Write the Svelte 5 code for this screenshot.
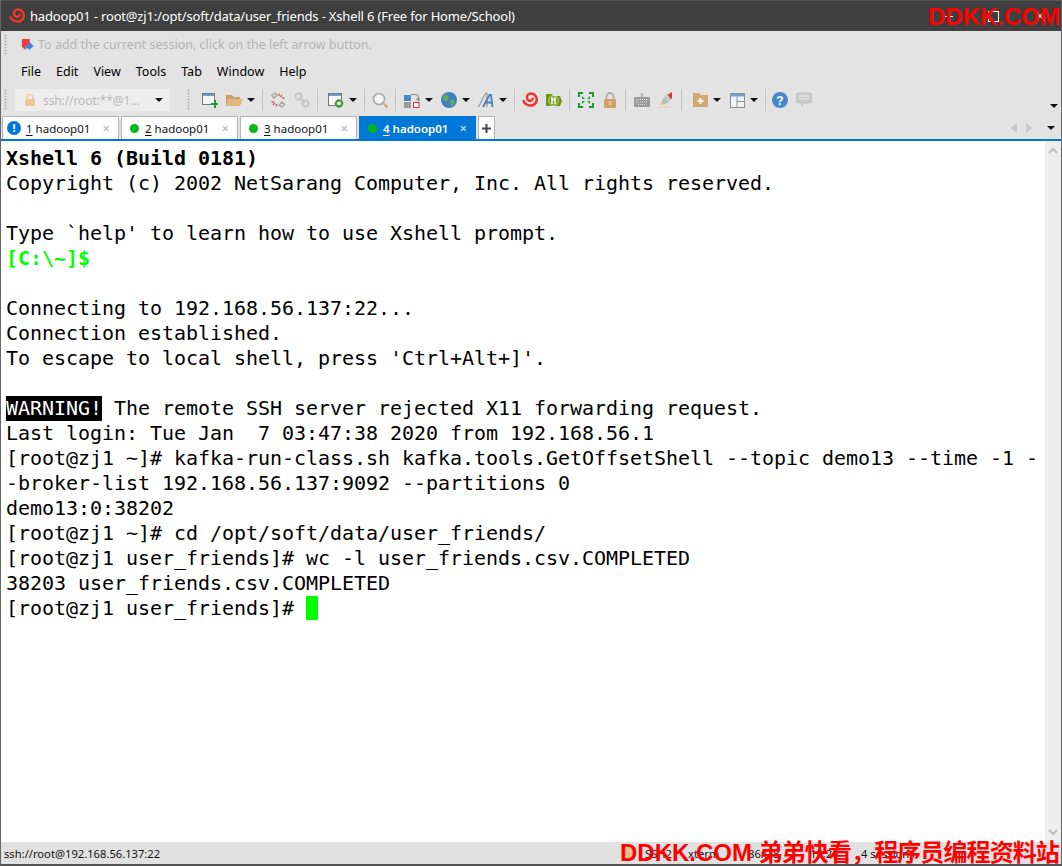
<script>
  const menus = ["File", "Edit", "View", "Tools", "Tab", "Window", "Help"];
  const tabs = [
    { n: "1", name: "hadoop01", state: "alert" },
    { n: "2", name: "hadoop01", state: "ok" },
    { n: "3", name: "hadoop01", state: "ok" },
    { n: "4", name: "hadoop01", state: "ok", active: true },
  ];
  const lines = [
    { text: "Xshell 6 (Build 0181)", cls: "bold" },
    { text: "Copyright (c) 2002 NetSarang Computer, Inc. All rights reserved." },
    { text: "" },
    { text: "Type `help' to learn how to use Xshell prompt." },
    { text: "[C:\\~]$", cls: "green bold" },
    { text: "" },
    { text: "Connecting to 192.168.56.137:22..." },
    { text: "Connection established." },
    { text: "To escape to local shell, press 'Ctrl+Alt+]'." },
    { text: "" },
    { warn: "WARNING!", text: " The remote SSH server rejected X11 forwarding request." },
    { text: "Last login: Tue Jan  7 03:47:38 2020 from 192.168.56.1" },
    { text: "[root@zj1 ~]# kafka-run-class.sh kafka.tools.GetOffsetShell --topic demo13 --time -1 -" },
    { text: "-broker-list 192.168.56.137:9092 --partitions 0" },
    { text: "demo13:0:38202" },
    { text: "[root@zj1 ~]# cd /opt/soft/data/user_friends/" },
    { text: "[root@zj1 user_friends]# wc -l user_friends.csv.COMPLETED" },
    { text: "38203 user_friends.csv.COMPLETED" },
    { text: "[root@zj1 user_friends]# ", cursor: true },
  ];
</script>

{#snippet swirl()}
  <svg width="16" height="16" viewBox="0 0 16 16">
    <path d="M1.300 8 C2.500 14 11 15.500 14 10.500 C16.300 5.500 12.500 1 8.500 1.500 C5 2 3.800 6 6.300 8.200 C8.300 9.800 11 8.300 10.600 5.600" fill="none" stroke="#e8392e" stroke-width="2.500" />
  </svg>
{/snippet}

{#snippet drop()}
  <span class="drop"><i class="tri"></i></span>
{/snippet}

<div class="window">
  <div class="titlebar">
    <span class="logo">{@render swirl()}</span>
    <span class="title">hadoop01 - root@zj1:/opt/soft/data/user_friends - Xshell 6 (Free for Home/School)</span>
    <span class="winbtns">
      <i class="min"></i>
      <i class="max"></i>
      <svg class="close" width="10" height="10" viewBox="0 0 10 10"><path d="M0 0L10 10M10 0L0 10" stroke="#fff" stroke-width="1.2" /></svg>
    </span>
  </div>

  <div class="chrome">
    <div class="hintrow">
      <span class="grip"></span>
      <svg class="hinticon" width="14" height="14" viewBox="0 0 16 16">
        <path d="M1 1H10V6L5 10V14L1 10Z" fill="#ea3b3f" />
        <path d="M5 10L9 6V4L14.500 9L9 14V12H5Z" fill="#3f87d6" />
      </svg>
      <span class="hint">To add the current session, click on the left arrow button.</span>
    </div>

    <div class="menubar">
      {#each menus as m}
        <span class="menu">{m}</span>
      {/each}
    </div>

    <div class="toolbar">
      <span class="grip"></span>
      <div class="address">
        <svg width="12" height="12" viewBox="0 0 12 12">
          <path d="M3 5V3.500A3 3 0 0 1 9 3.500V5" fill="none" stroke="#e6cfa6" stroke-width="1.500" />
          <rect x="1" y="5" width="10" height="7" rx="1" fill="#e8c890" />
        </svg>
        <span class="addrtext">ssh://root:**@1...</span>
        <i class="tri"></i>
      </div>
      <span class="grip second"></span>

      <span class="btn">
        <svg width="16" height="16" viewBox="0 0 16 16">
          <rect x="0.500" y="1.500" width="12" height="11" fill="#f6f6f6" stroke="#777" />
          <rect x="1" y="2" width="11" height="2" fill="#6b9fd8" />
          <path d="M12 8V11H9V13H12V16H14V13H16V11H14V8Z" fill="#1e9e2c" />
        </svg>
      </span>
      <span class="btn">
        <svg width="17" height="16" viewBox="0 0 17 16">
          <path d="M0 3H6L7.500 5H14V13H0Z" fill="#c9a06c" />
          <path d="M2 7H17L14 14H0Z" fill="#e2b880" />
        </svg>
      </span>
      {@render drop()}
      <span class="sep"></span>

      <span class="btn">
        <svg width="16" height="16" viewBox="0 0 16 16" fill="none">
          <path d="M2 3.500L5 1L7 3L4 6ZM9 13L12 10L14.500 12.500L11.500 15Z" stroke="#aaa" stroke-width="1.600" />
          <path d="M9 1.500V4M12 3L10.500 5M14.500 6H12M1.500 10H4M3 13L5 11M6.500 14.500V12" stroke="#e0555a" stroke-width="1.400" />
        </svg>
      </span>
      <span class="btn">
        <svg width="16" height="16" viewBox="0 0 16 16" fill="none">
          <rect x="1.500" y="1.500" width="6" height="6" rx="2.500" stroke="#c4c4c4" stroke-width="1.800" />
          <rect x="8.500" y="8.500" width="6" height="6" rx="2.500" stroke="#c4c4c4" stroke-width="1.800" />
          <path d="M5.500 5.500L10.500 10.500" stroke="#c4c4c4" stroke-width="2" />
        </svg>
      </span>
      <span class="sep wide"></span>

      <span class="btn">
        <svg width="16" height="16" viewBox="0 0 16 16">
          <rect x="0.500" y="1.500" width="13" height="12" fill="#f6f6f6" stroke="#777" />
          <rect x="1" y="2" width="12" height="2" fill="#6b9fd8" />
          <circle cx="11" cy="11.500" r="3" fill="none" stroke="#3f9e2f" stroke-width="2" />
          <path d="M11 7V9M11 14V16M6.500 11.500H8.500M13.500 11.500H15.500" stroke="#3f9e2f" stroke-width="1.500" />
        </svg>
      </span>
      {@render drop()}
      <span class="sep"></span>

      <span class="btn">
        <svg width="17" height="17" viewBox="0 0 17 17" fill="none">
          <circle cx="7" cy="7" r="5.500" fill="#f4f4f4" stroke="#a8a8a8" stroke-width="1.600" />
          <path d="M11 11L15.500 15.500" stroke="#d9a877" stroke-width="2.400" />
        </svg>
      </span>
      <span class="sep mid"></span>

      <span class="btn">
        <svg width="16" height="16" viewBox="0 0 16 16" fill="none">
          <rect x="0" y="3" width="7" height="6" fill="#4a86c8" />
          <rect x="0" y="10" width="7" height="6" fill="#9a9a9a" />
          <rect x="9.500" y="10.500" width="5.500" height="5" fill="#fff" stroke="#d8343a" />
          <path d="M7 2.500H11Q14.500 2.500 14.500 6V8M12.500 6.500L14.500 8.500L16 6.500" stroke="#8a8a8a" stroke-width="1.200" />
        </svg>
      </span>
      {@render drop()}

      <span class="btn">
        <svg width="16" height="16" viewBox="0 0 16 16">
          <circle cx="8" cy="8" r="8" fill="#3f7fc4" />
          <path d="M3 3C5 2 7 3 8 5C8 7 6 7.500 5 9.500C3 9 1.500 7 2 5ZM9 8C11 7 13.500 8 14 10C13.500 12 12 14 10.500 14.500C10 12.500 8.500 10 9 8Z" fill="#5fae52" />
        </svg>
      </span>
      {@render drop()}

      <span class="btn">
        <svg width="17" height="16" viewBox="0 0 17 16" fill="none">
          <path d="M0.500 15L7.500 1.500H9V15" stroke="#a0a0a0" stroke-width="1.300" />
          <path d="M5 15L11.500 3H13L14.500 15M7.500 10.500H14" stroke="#3f7fc4" stroke-width="1.800" />
        </svg>
      </span>
      {@render drop()}
      <span class="sep"></span>

      <span class="btn">{@render swirl()}</span>
      <span class="btn">
        <svg width="16" height="16" viewBox="0 0 16 16">
          <path d="M0 2H6L7 4H14L16 9L14 14H0Z" fill="#6f9a10" />
          <circle cx="7.500" cy="8.500" r="4.800" fill="#6f9a10" stroke="#fff" stroke-width="0.600" />
          <path d="M6 5V12M9 5V12M6 8L9 7" fill="none" stroke="#fff" stroke-width="1.500" />
        </svg>
      </span>
      <span class="sep mid"></span>

      <span class="btn">
        <svg width="16" height="16" viewBox="0 0 16 16" fill="#1f9a2c">
          <path d="M0 0H5V2H2V5H0ZM11 0H16V5H14V2H11ZM0 11H2V14H5V16H0ZM14 11H16V16H11V14H14Z" />
          <path d="M4 4L7 7H4ZM12 4L9 7H12ZM4 12L7 9H4ZM12 12L9 9H12Z" />
        </svg>
      </span>
      <span class="btn">
        <svg width="14" height="16" viewBox="0 0 14 16" fill="none">
          <path d="M3.500 8V4.500A3.500 3.500 0 0 1 10.500 4.500V8" stroke="#b0b0b0" stroke-width="1.800" />
          <rect x="1" y="7" width="12" height="9" rx="1" fill="#cfa268" />
          <rect x="6.300" y="9" width="1.400" height="4" fill="#eedcc0" />
        </svg>
      </span>
      <span class="sep mid"></span>

      <span class="btn">
        <svg width="16" height="16" viewBox="0 0 16 16">
          <rect x="0" y="5" width="16" height="10" rx="1" fill="#9a9a9a" />
          <path d="M7.500 1H8.500V5H7.500Z" fill="#888" />
          <path d="M2 7.500H14M2 10H14M4 12.500H12" stroke="#e4e4e4" stroke-dasharray="1 1" />
        </svg>
      </span>
      <span class="btn">
        <svg width="16" height="16" viewBox="0 0 16 16">
          <path d="M6 5L11 10L7 12L4 13L4 9Z" fill="#bdbdbd" />
          <path d="M9 3L14 0V6L12 8Z" fill="#d93340" />
          <path d="M6 5L9 2L13 7L11 10Z" fill="#c8c8c8" />
          <path d="M3 10L5 12L2 13.500Z" fill="#f0c58c" />
          <rect x="0" y="14.500" width="12" height="1" fill="#f0c88e" />
        </svg>
      </span>
      <span class="sep wide"></span>

      <span class="btn">
        <svg width="15" height="14" viewBox="0 0 15 14">
          <path d="M0 0H6L7.500 2H15V14H0Z" fill="#d4a871" />
          <path d="M6.500 5H8.500V7H10.500V9H8.500V11H6.500V9H4.500V7H6.500Z" fill="#fbf4e8" />
        </svg>
      </span>
      {@render drop()}
      <span class="btn">
        <svg width="15" height="15" viewBox="0 0 15 15" fill="none">
          <rect x="0.500" y="0.500" width="14" height="14" stroke="#8f8f8f" fill="#f3f3f3" />
          <rect x="1" y="1" width="13" height="2.500" fill="#6b9fd8" />
          <path d="M7 3.500V14.500M7 8.500H14.500" stroke="#8f8f8f" />
        </svg>
      </span>
      {@render drop()}
      <span class="sep tight"></span>

      <span class="btn">
        <svg width="16" height="16" viewBox="0 0 16 16">
          <circle cx="8" cy="8" r="8" fill="#4a87cb" />
          <text x="8" y="12.500" text-anchor="middle" class="qmark">?</text>
        </svg>
      </span>
      <span class="btn">
        <svg width="16" height="16" viewBox="0 0 16 16">
          <path d="M1.500 0.500H14.500Q16 0.500 16 2V10Q16 11.500 14.500 11.500H8L5 15V11.500H1.500Q0 11.500 0 10V2Q0 0.500 1.500 0.500Z" fill="#c8c8c8" />
          <path d="M3 4H13M3 7H13" stroke="#e4e4e4" stroke-width="1.400" />
        </svg>
      </span>
      <span class="overflow"><i class="tri"></i></span>
    </div>

    <div class="tabbar">
      {#each tabs as t}
        <div class="tab" class:active={t.active}>
          {#if t.state === "alert"}
            <span class="alert">!</span>
          {:else}
            <span class="dot"></span>
          {/if}
          <span class="tabname"><u>{t.n}</u> {t.name}</span>
          <span class="x">×</span>
        </div>
      {/each}
      <div class="plus">
        <svg width="9" height="9" viewBox="0 0 9 9"><path d="M4.500 0V9M0 4.500H9" stroke="#444" stroke-width="2" /></svg>
      </div>
      <div class="tabnav">
        <i class="nav left"></i>
        <i class="nav right"></i>
        <i class="tri"></i>
      </div>
    </div>
  </div>

  <div class="main">
    <div class="terminal">
      {#each lines as l}
        <div class="line {l.cls ?? ''}">{#if l.warn}<span class="warn">{l.warn}</span>{/if}{l.text}{#if l.cursor}<span class="cursor"> </span>{/if}</div>
      {/each}
    </div>
    <div class="scrollbar">
      <svg width="10" height="7" viewBox="0 0 10 7"><path d="M1 6L5 2L9 6" fill="none" stroke="#bcbcbc" stroke-width="2" /></svg>
      <svg width="10" height="7" viewBox="0 0 10 7"><path d="M1 1L5 5L9 1" fill="none" stroke="#bcbcbc" stroke-width="2" /></svg>
    </div>
  </div>

  <div class="status">
    <span class="st-addr">ssh://root@192.168.56.137:22</span>
    <span class="st-lock"></span>
    <span class="st-proto">SSH2</span>
    <span class="st-term">xterm</span>
    <span class="st-size">86x28</span>
    <span class="st-pos">19,26</span>
    <span class="st-sess">4 sessions</span>
  </div>

  <div class="mark top">DDKK.COM</div>
  <div class="mark bottom">DDKK.COM <span class="cjk">弟弟快看，程序员编程资料站</span></div>
</div>

<style>
  :global(body) {
    margin: 0;
    background: #fff;
  }

  .window {
    position: relative;
    width: 1062px;
    height: 866px;
    display: flex;
    flex-direction: column;
    overflow: hidden;
    box-sizing: border-box;
    border-left: 1px solid #666;
    border-right: 1px solid #666;
    border-bottom: 2px solid #555;
    font-family: "Noto Sans", "Noto Sans CJK SC", sans-serif;
    font-size: 12px;
  }

  .titlebar {
    height: 31px;
    flex: none;
    margin: 0 -1px;
    background: #3f3f3f;
    border-top: 1px solid #565656;
    box-sizing: border-box;
    display: flex;
    align-items: center;
    color: #fff;
    padding-left: 9px;
  }
  .logo {
    display: flex;
    margin-right: 5px;
  }
  .title {
    font-size: 13px;
    letter-spacing: -0.17px;
  }
  .winbtns {
    margin-left: auto;
    display: flex;
    align-items: center;
    padding-right: 17px;
  }
  .min {
    width: 8px;
    height: 1px;
    background: #fff;
    margin-right: 35px;
  }
  .max {
    width: 9px;
    height: 9px;
    border: 1px solid #fff;
    margin-right: 36px;
  }

  .chrome {
    flex: none;
    background: #e3e3e3;
    color: #000;
  }

  .grip {
    width: 3px;
    height: 22px;
    margin-left: 3px;
    flex: none;
    background-image: radial-gradient(#a6a6a6 40%, transparent 50%);
    background-size: 3px 3px;
  }
  .grip.second {
    margin-left: 17px;
    margin-right: 8px;
  }

  .hintrow {
    height: 27px;
    display: flex;
    align-items: center;
  }
  .hinticon {
    margin-left: 14px;
  }
  .hint {
    margin-left: 3px;
    font-size: 12.5px;
    color: #b4b4b4;
  }

  .menubar {
    height: 27px;
    display: flex;
    align-items: center;
    gap: 15px;
    padding-left: 20px;
    font-size: 12.5px;
  }

  .toolbar {
    height: 30px;
    display: flex;
    align-items: center;
    position: relative;
  }
  .address {
    width: 155px;
    height: 22px;
    margin-left: 8px;
    box-sizing: border-box;
    padding: 0 7px 0 9px;
    background: #ededed;
    display: flex;
    align-items: center;
    flex: none;
  }
  .addrtext {
    margin-left: 7px;
    color: #b8b8b8;
    letter-spacing: -0.1px;
  }
  .address .tri {
    margin-left: auto;
  }

  .btn {
    width: 24px;
    height: 22px;
    flex: none;
    display: flex;
    align-items: center;
    justify-content: center;
  }
  .drop {
    width: 13px;
    flex: none;
    display: flex;
    padding-left: 1px;
    box-sizing: border-box;
  }
  .tri {
    display: block;
    flex: none;
    width: 0;
    height: 0;
    border-left: 4px solid transparent;
    border-right: 4px solid transparent;
    border-top: 4px solid #111;
  }
  .sep {
    width: 7px;
    height: 22px;
    flex: none;
    box-sizing: border-box;
    border-left: 1px solid #c4c4c4;
    margin-left: 3px;
    margin-right: -3px;
  }
  .sep.mid {
    width: 8px;
  }
  .sep.wide {
    width: 10px;
  }
  .sep.tight {
    width: 6px;
  }
  .qmark {
    font-family: "Liberation Sans", sans-serif;
    font-weight: 700;
    font-size: 12px;
    fill: #fff;
  }
  .overflow {
    position: absolute;
    right: 3px;
    bottom: 7px;
  }

  .tabbar {
    height: 24px;
    display: flex;
    align-items: stretch;
    padding: 1px 0 0 1px;
    box-sizing: border-box;
    gap: 2px;
    font-size: 11.5px;
  }
  .tab {
    width: 117px;
    box-sizing: border-box;
    background: #fff;
    border: 1px solid #b4b4b4;
    border-bottom: none;
    display: flex;
    align-items: center;
    position: relative;
    color: #111;
  }
  .tab.active {
    background: #0078d7;
    border-color: #0078d7;
    color: #fff;
    font-weight: 600;
  }
  .dot {
    width: 9px;
    height: 9px;
    border-radius: 50%;
    background: #00b81c;
    margin-left: 8px;
    margin-right: 6px;
    flex: none;
  }
  .alert {
    width: 14px;
    height: 14px;
    border-radius: 50%;
    background: #0078d7;
    color: #fff;
    font-weight: 700;
    font-size: 11px;
    line-height: 14px;
    text-align: center;
    margin-left: 4px;
    margin-right: 5px;
    flex: none;
  }
  .tabname u {
    text-underline-offset: 2px;
  }
  .x {
    margin-left: auto;
    margin-right: 8px;
    color: #b0b0b0;
    font-size: 13px;
    font-weight: 400;
  }
  .tab.active .x {
    color: #dceaf6;
  }
  .plus {
    width: 17px;
    box-sizing: border-box;
    background: #fff;
    border: 1px solid #b4b4b4;
    border-bottom: none;
    display: flex;
    align-items: center;
    justify-content: center;
  }
  .tabnav {
    margin-left: auto;
    display: flex;
    align-items: center;
    padding-right: 6px;
  }
  .nav {
    width: 0;
    height: 0;
    border-top: 5px solid transparent;
    border-bottom: 5px solid transparent;
  }
  .nav.left {
    border-right: 6px solid #c8c8c8;
    margin-right: 9px;
  }
  .nav.right {
    border-left: 6px solid #c8c8c8;
    margin-right: 15px;
  }

  .main {
    height: 703px;
    flex: none;
    display: flex;
    border-top: 2px solid #0078d7;
    box-sizing: border-box;
    background: #fff;
  }
  .terminal {
    flex: 1;
    padding: 5px 0 0 5px;
    font-family: "DejaVu Sans Mono", monospace;
    font-size: 20px;
    letter-spacing: -0.04px;
    color: #000;
    overflow: hidden;
  }
  .line {
    height: 25px;
    line-height: 25px;
    white-space: pre;
  }
  .bold {
    font-weight: 700;
  }
  .green {
    color: #00ff00;
  }
  .warn {
    background: #000;
    color: #fff;
    display: inline-block;
    height: 25px;
  }
  .cursor {
    display: inline-block;
    width: 12px;
    height: 24px;
    background: #00ff00;
    vertical-align: top;
  }
  .scrollbar {
    width: 16px;
    flex: none;
    background: #eeeeee;
    display: flex;
    flex-direction: column;
    justify-content: space-between;
    align-items: center;
    padding: 6px 0;
    box-sizing: border-box;
  }

  .status {
    flex: 1;
    background: #e1e1e1;
    display: flex;
    align-items: center;
    font-size: 11.2px;
    color: #111;
    padding-left: 3px;
    position: relative;
  }
  .st-addr {
    width: 621px;
    flex: none;
  }
  .st-lock {
    width: 10px;
    height: 12px;
    background: #e8c08c;
    flex: none;
    margin-right: 10px;
  }
  .st-proto {
    width: 43px;
    flex: none;
  }
  .st-term {
    width: 60px;
    flex: none;
  }
  .st-size {
    width: 62px;
    flex: none;
  }
  .st-pos {
    width: 51px;
    flex: none;
  }

  .mark {
    position: absolute;
    color: #ff0000;
    font-family: "Liberation Sans", "Noto Sans CJK SC", sans-serif;
    font-weight: 700;
    font-size: 24px;
    line-height: 28px;
    white-space: nowrap;
  }
  .mark.top {
    top: 3px;
    right: 1px;
  }
  .mark.bottom {
    left: 619px;
    bottom: -3px;
  }
  .cjk {
    letter-spacing: -0.9px;
  }
</style>
